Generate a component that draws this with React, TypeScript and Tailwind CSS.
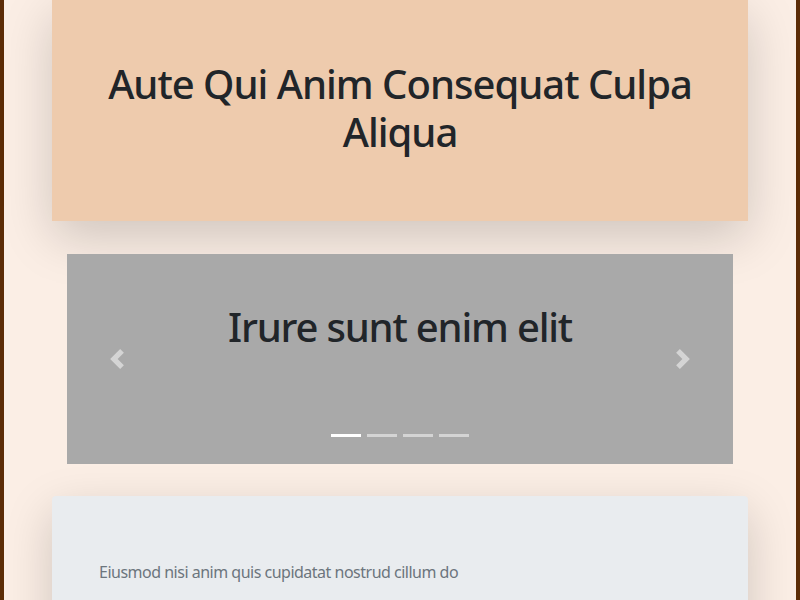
export default function App() {
  return (
    <div className="h-[600px] overflow-hidden bg-[#5c2c06] px-[4px] font-['Noto_Sans',sans-serif] text-[#212529]">
      <div className="h-full bg-[#fbeee5]">
        <div className="mx-auto w-[696px]">
          <div className="flex h-[221px] items-center justify-center bg-[#eecbad] px-10 pb-[5px] shadow-[0_16px_48px_rgba(0,0,0,0.175)]">
            <h1 className="text-center text-[40px] font-medium leading-[48px] tracking-[-1px]">
              Aute Qui Anim Consequat Culpa Aliqua
            </h1>
          </div>

          <div className="mx-[15px] mt-[33px]">
            <div className="relative h-[210px] bg-[#a9a9a9]">
              <div className="flex justify-center pt-[49px]">
                <h2 className="text-[40px] font-medium leading-[48px] tracking-[-1.2px]">Irure sunt enim elit</h2>
              </div>
              <button className="absolute inset-y-0 left-0 flex w-[15%] items-center justify-center">
                <svg width="20" height="20" viewBox="0 0 8 8" fill="#fff" className="opacity-50">
                  <path d="M5.25 0l-4 4 4 4 1.5-1.5L4.25 4l2.5-2.5L5.25 0z" />
                </svg>
              </button>
              <button className="absolute inset-y-0 right-0 flex w-[15%] items-center justify-center">
                <svg width="20" height="20" viewBox="0 0 8 8" fill="#fff" className="opacity-50">
                  <path d="M2.75 0l-1.5 1.5L3.75 4l-2.5 2.5L2.75 8l4-4-4-4z" />
                </svg>
              </button>
              <ol className="absolute inset-x-0 bottom-[27px] flex justify-center gap-[6px]">
                <li className="h-[3px] w-[30px] bg-white" />
                <li className="h-[3px] w-[30px] bg-white/50" />
                <li className="h-[3px] w-[30px] bg-white/50" />
                <li className="h-[3px] w-[30px] bg-white/50" />
              </ol>
            </div>
          </div>

          <div className="mt-[32px] h-[200px] rounded-t bg-[#e9ecef] px-[47px] pt-[64px] shadow-[0_16px_48px_rgba(0,0,0,0.175)]">
            <p className="text-base tracking-[-0.5px] text-[#6c757d]">Eiusmod nisi anim quis cupidatat nostrud cillum do</p>
          </div>
        </div>
      </div>
    </div>
  );
}
